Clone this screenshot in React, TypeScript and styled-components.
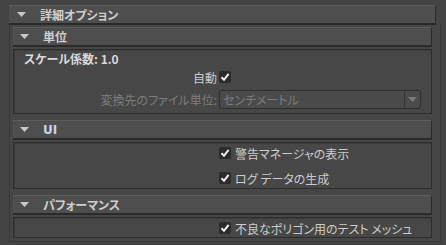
import React from 'react';
import styled, { createGlobalStyle } from 'styled-components';

const GlobalStyle = createGlobalStyle`
  html, body {
    margin: 0;
    padding: 0;
    background: #444444;
  }
  body {
    font-family: "Noto Sans CJK JP", "Noto Sans", sans-serif;
    font-size: 12px;
    font-feature-settings: "palt";
    color: #c8c8c8;
  }
`;

const Page = styled.div`
  width: 446px;
  height: 245px;
  padding: 5px 0 0 9px;
  box-sizing: border-box;
  overflow: hidden;
`;

const Header = styled.div<{ $outer?: boolean }>`
  box-sizing: border-box;
  height: 20px;
  width: ${p => (p.$outer ? '427px' : '100%')};
  display: flex;
  align-items: center;
  padding-left: ${p => (p.$outer ? '8px' : '7px')};
  gap: 14px;
  background: #4e4e4e;
  border-top: 1px solid #5c5c5c;
  border-right: 1px solid #2a2a2a;
  border-bottom: 2px solid #2a2a2a;
`;

const Title = styled.span<{ $latin?: boolean }>`
  font-weight: 700;
  font-size: 12px;
  line-height: 1;
  color: ${p => (p.$latin ? '#c9d2e6' : '#cfcfcf')};
  font-family: ${p =>
    p.$latin
      ? '"DejaVu Sans", "Liberation Sans", sans-serif'
      : '"Noto Sans CJK JP", sans-serif'};
`;

const OuterBody = styled.div`
  box-sizing: border-box;
  width: 432px;
  padding: 2px 8px 3px 3px;
  background: #464646;
  border-left: 1px solid #383838;
  border-right: 1px solid #383838;
  border-bottom: 1px solid #383838;
`;

const Section = styled.div`
  display: flex;
  flex-direction: column;
  gap: 2px;
  & + & {
    margin-top: 6px;
  }
`;

const Body = styled.div<{ $height: number }>`
  box-sizing: border-box;
  height: ${p => p.$height}px;
  background: #474747;
  border: 1px solid #2d2d2d;
  box-shadow: inset 1px 1px 0 #3c3c3c;
`;

const UnitGrid = styled.div`
  display: grid;
  grid-template-columns: 205px 1fr;
  grid-template-rows: 17px 20px 19px;
  row-gap: 0;
  padding-right: 9px;
  & > :nth-child(n + 4) {
    margin-top: 5px;
  }
`;

const ScaleText = styled.div`
  grid-column: 1 / 3;
  padding-left: 10px;
  font-weight: 700;
  color: #dadada;
  display: flex;
  align-items: center;
`;

const FieldLabel = styled.div<{ $disabled?: boolean }>`
  display: flex;
  align-items: center;
  justify-content: flex-end;
  padding-right: 2px;
  white-space: nowrap;
  color: ${p => (p.$disabled ? '#7d7d7d' : '#cccccc')};
`;

const ControlCell = styled.div`
  display: flex;
  align-items: center;
`;

const CheckList = styled.div`
  display: flex;
  flex-direction: column;
  gap: 7px;
  padding: 1px 0 0 205px;
`;

const CheckRow = styled.label`
  height: 18px;
  display: flex;
  align-items: center;
  gap: 4px;
  white-space: nowrap;
  color: #cccccc;
`;

const Box = styled.span`
  width: 12px;
  height: 12px;
  border-radius: 2px;
  background: #2b2b2b;
  display: flex;
  align-items: center;
  justify-content: center;
  flex: none;
`;

const Select = styled.div`
  box-sizing: border-box;
  width: 202px;
  height: 19px;
  display: flex;
  align-items: stretch;
  background: #4b4b4b;
  border: 1px solid #2e2e2e;
  border-radius: 3px;
  color: #7b7b7b;
`;

const SelectText = styled.span`
  flex: 1;
  display: flex;
  align-items: center;
  padding-left: 3px;
`;

const SelectArrow = styled.span`
  width: 15px;
  border-left: 1px solid #353535;
  display: flex;
  align-items: center;
  justify-content: center;
`;

const Caret = ({ color = '#c8c8c8' }: { color?: string }) => (
  <svg width="9" height="5" viewBox="0 0 9 5">
    <path d="M0 0H9L4.5 5Z" fill={color} />
  </svg>
);

const Check = () => (
  <Box>
    <svg width="10" height="10" viewBox="0 0 10 10">
      <path d="M1.5 5.2L4 7.8L8.6 1.8" stroke="#f0f0f0" strokeWidth="2" fill="none" />
    </svg>
  </Box>
);

const CheckItem = ({ label }: { label: string }) => (
  <CheckRow>
    <Check />
    {label}
  </CheckRow>
);

const App = () => (
  <Page>
    <GlobalStyle />
    <Header $outer>
      <Caret />
      <Title>詳細オプション</Title>
    </Header>
    <OuterBody>
      <Section>
        <Header>
          <Caret />
          <Title>単位</Title>
        </Header>
        <Body $height={65}>
          <UnitGrid>
            <ScaleText>スケール係数: 1.0</ScaleText>
            <FieldLabel>自動</FieldLabel>
            <ControlCell>
              <Check />
            </ControlCell>
            <FieldLabel $disabled>変換先のファイル単位:</FieldLabel>
            <ControlCell>
              <Select>
                <SelectText>センチメートル</SelectText>
                <SelectArrow>
                  <Caret color="#7a7a7a" />
                </SelectArrow>
              </Select>
            </ControlCell>
          </UnitGrid>
        </Body>
      </Section>
      <Section>
        <Header>
          <Caret />
          <Title $latin>UI</Title>
        </Header>
        <Body $height={47}>
          <CheckList>
            <CheckItem label="警告マネージャの表示" />
            <CheckItem label="ログ データの生成" />
          </CheckList>
        </Body>
      </Section>
      <Section>
        <Header>
          <Caret />
          <Title>パフォーマンス</Title>
        </Header>
        <Body $height={21}>
          <CheckList>
            <CheckItem label="不良なポリゴン用のテスト メッシュ" />
          </CheckList>
        </Body>
      </Section>
    </OuterBody>
  </Page>
);

export default App;
